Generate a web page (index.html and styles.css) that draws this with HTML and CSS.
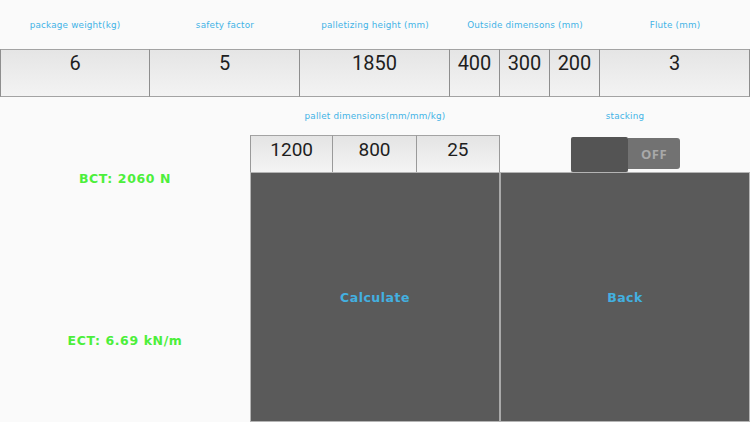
FILE: index.html
```html
<!DOCTYPE html>
<html>
<head>
<meta charset="utf-8">
<link rel="stylesheet" href="styles.css">
</head>
<body>
<div class="app">
  <div class="labels">
    <div class="label">package weight(kg)</div>
    <div class="label">safety factor</div>
    <div class="label">palletizing height (mm)</div>
    <div class="label">Outside dimensons (mm)</div>
    <div class="label">Flute (mm)</div>
  </div>
  <div class="inputs">
    <div class="field w150 first">6</div>
    <div class="field w150">5</div>
    <div class="field w150">1850</div>
    <div class="field w50">400</div>
    <div class="field w50">300</div>
    <div class="field w50">200</div>
    <div class="field w150">3</div>
  </div>
  <div class="lower">
    <div class="results">
      <div class="result bct">BCT: 2060 N</div>
      <div class="result ect">ECT: 6.69 kN/m</div>
    </div>
    <div class="col">
      <div class="label row-label">pallet dimensions(mm/mm/kg)</div>
      <div class="pallet">
        <div class="pfield first">1200</div>
        <div class="pfield">800</div>
        <div class="pfield">25</div>
      </div>
      <div class="bigbtn calc">Calculate</div>
    </div>
    <div class="col">
      <div class="label row-label">stacking</div>
      <div class="toggle-wrap">
        <div class="toggle">
          <div class="thumb"></div>
          <div class="track">OFF</div>
        </div>
      </div>
      <div class="bigbtn back">Back</div>
    </div>
  </div>
</div>
</body>
</html>
```
FILE: styles.css
```css
html, body {
  margin: 0;
  padding: 0;
  background: #fafafa;
}
.app {
  width: 750px;
  height: 422px;
  overflow: hidden;
  display: flex;
  flex-direction: column;
}
.labels {
  display: grid;
  grid-template-columns: repeat(5, 150px);
  height: 49px;
  align-items: center;
}
.label {
  font-family: "DejaVu Sans", sans-serif;
  font-size: 8.8px;
  color: #3fb3e6;
  text-align: center;
  letter-spacing: 0.2px;
  padding-top: 1px;
}
.inputs {
  display: flex;
  height: 48px;
}
.field {
  box-sizing: border-box;
  height: 48px;
  border-top: 1px solid #a3a3a3;
  border-bottom: 1px solid #a3a3a3;
  border-right: 1px solid #8e8e8e;
  background: linear-gradient(#e5e5e5, #f3f3f3);
  font-family: Roboto, sans-serif;
  font-size: 20px;
  color: #1e1e1e;
  text-align: center;
  padding-top: 0;
  line-height: 26px;
}
.field.first { border-left: 1px solid #8e8e8e; }
.w150 { width: 150px; }
.w50 { width: 50px; }
.lower {
  display: grid;
  grid-template-columns: 250px 250px 250px;
  flex: 1;
}
.results {
  display: flex;
  flex-direction: column;
  align-items: center;
  padding-top: 74px;
}
.result {
  font-family: "DejaVu Sans", sans-serif;
  font-weight: 700;
  font-size: 12.5px;
  line-height: 16px;
  color: #4cef3b;
  letter-spacing: 0.6px;
}
.ect { margin-top: 146px; }
.col {
  display: flex;
  flex-direction: column;
}
.row-label {
  height: 38px;
  line-height: 38px;
  padding-top: 0;
}
.pallet {
  display: flex;
  height: 37px;
}
.pfield {
  box-sizing: border-box;
  width: 83.33px;
  height: 37px;
  border-top: 1px solid #a3a3a3;
  border-right: 1px solid #9a9a9a;
  background: linear-gradient(#e4e4e4, #f4f4f4);
  font-family: Roboto, sans-serif;
  font-size: 19px;
  color: #1e1e1e;
  text-align: center;
  line-height: 28px;
}
.pfield.first { border-left: 1px solid #9a9a9a; }
.toggle-wrap {
  height: 37px;
  display: flex;
  justify-content: center;
  padding-top: 2px;
  box-sizing: border-box;
  padding-left: 1px;
}
.toggle {
  display: flex;
  width: 109px;
  height: 35px;
}
.thumb {
  width: 57px;
  height: 35px;
  background: #545454;
  border-radius: 2px;
  box-shadow: 0 1px 1px rgba(0,0,0,0.2);
}
.track {
  width: 52px;
  height: 31px;
  margin-top: 1px;
  background: #727272;
  border-radius: 0 3px 3px 0;
  font-family: "Open Sans", "DejaVu Sans", sans-serif;
  font-weight: 700;
  font-size: 13px;
  color: #a9a9a9;
  display: flex;
  align-items: center;
  justify-content: center;
  letter-spacing: 0.5px;
}
.bigbtn {
  box-sizing: border-box;
  flex: 1;
  background: #5a5a5a;
  border: 1px solid #b4b4b4;
  display: flex;
  align-items: center;
  justify-content: center;
  font-family: "DejaVu Sans", sans-serif;
  font-weight: 700;
  font-size: 12.5px;
  color: #43b0e0;
  letter-spacing: 0.5px;
}
.calc { border-right: 1px solid #a9a9a9; }
.back { border-left: 1px solid #a9a9a9; }
```
